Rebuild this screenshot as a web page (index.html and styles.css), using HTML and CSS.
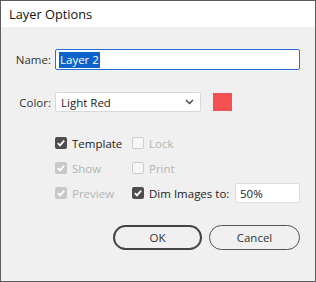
FILE: index.html
```html
<!DOCTYPE html>
<html>
<head>
<meta charset="utf-8">
<link rel="stylesheet" href="styles.css">
</head>
<body>
<div class="window">
  <div class="titlebar">Layer Options</div>
  <div class="content">
    <div class="field name-row">
      <label class="lbl">Name:</label>
      <div class="textbox focused"><span class="sel">Layer 2</span></div>
    </div>
    <div class="field color-row">
      <label class="lbl">Color:</label>
      <div class="select"><span>Light Red</span>
        <svg class="chev" width="9" height="6" viewBox="0 0 9 6"><path d="M1 1 L4.5 4.5 L8 1" fill="none" stroke="#444" stroke-width="1.4"/></svg>
      </div>
      <div class="swatch"></div>
    </div>
    <div class="checks">
      <div class="check"><span class="box on"><svg viewBox="0 0 12 12"><path d="M2.8 6.2 L5 8.4 L9.2 3.6" fill="none" stroke="#fff" stroke-width="1.8"/></svg></span><span class="txt">Template</span></div>
      <div class="check dis"><span class="box off"></span><span class="txt">Lock</span></div>
      <div class="check dis"><span class="box on"><svg viewBox="0 0 12 12"><path d="M2.8 6.2 L5 8.4 L9.2 3.6" fill="none" stroke="#fff" stroke-width="1.8"/></svg></span><span class="txt">Show</span></div>
      <div class="check dis"><span class="box off"></span><span class="txt">Print</span></div>
      <div class="check dis"><span class="box on"><svg viewBox="0 0 12 12"><path d="M2.8 6.2 L5 8.4 L9.2 3.6" fill="none" stroke="#fff" stroke-width="1.8"/></svg></span><span class="txt">Preview</span></div>
      <div class="check dim"><span class="box on"><svg viewBox="0 0 12 12"><path d="M2.8 6.2 L5 8.4 L9.2 3.6" fill="none" stroke="#fff" stroke-width="1.8"/></svg></span><span class="txt">Dim Images to:</span><div class="textbox small">50%</div></div>
    </div>
    <div class="buttons">
      <button class="btn default">OK</button>
      <button class="btn">Cancel</button>
    </div>
  </div>
</div>
</body>
</html>
```

FILE: styles.css
```css
html, body { margin: 0; padding: 0; }
body { font-family: "Open Sans", "Noto Sans", sans-serif; font-size: 11.5px; color: #222; }
.window {
  width: 316px; height: 282px; box-sizing: border-box;
  border: 1px solid #5c5c5c; background: #f0f0f0;
  display: flex; flex-direction: column;
}
.titlebar {
  height: 26px; background: #fff; padding-left: 8px;
  font-size: 12.8px; line-height: 27px; color: #111;
}
.content { display: flex; flex-direction: column; padding: 22px 15px 0 0; }
.field { display: flex; align-items: center; }
.lbl { width: 50px; text-align: right; padding-right: 4px; color: #333; font-size: 11.5px; }
.textbox {
  box-sizing: border-box; height: 21px; flex: 1;
  background: #fff; border: 1px solid #d4d4d4; border-radius: 2px;
  display: flex; align-items: center; padding-left: 3px; font-size: 11.5px;
}
.textbox.focused { border-color: #2a6fd0; }
.sel { background: #0b63c9; color: #fff; padding: 0 1px; line-height: 16px; }
.color-row { margin-top: 22px; }
.select {
  box-sizing: border-box; width: 146px; height: 20px;
  background: #fff; border: 1px solid #d8d8d8; border-radius: 2px;
  display: flex; align-items: center; justify-content: space-between;
  padding: 0 6px 0 5px; font-size: 11.5px;
}
.chev { display: block; }
.swatch { width: 19px; height: 18px; background: #f44f51; margin-left: 12px; }
.checks {
  display: grid; grid-template-columns: 77px 1fr; row-gap: 13px;
  margin: 25px 0 0 54px;
}
.check { display: flex; align-items: center; height: 12px; font-size: 11.5px; white-space: nowrap; }
.box { width: 12px; height: 12px; box-sizing: border-box; border-radius: 2px; margin-right: 5px; flex: none; }
.box svg { display: block; width: 12px; height: 12px; }
.box.on { background: #4d4d4d; }
.box.off { border: 1px solid #cdcdcd; background: #f7f7f7; }
.dis .box.on { background: #c8c8c8; }
.dis .txt { color: #b4b4b4; }
.dim .textbox.small { flex: none; width: 65px; height: 20px; margin-left: auto; border-color: #dedede; padding-left: 4px; }
.buttons { display: flex; justify-content: flex-end; gap: 7px; margin-top: 26px; }
.btn {
  font-family: inherit; font-size: 11.5px; color: #333; height: 25px;
  background: transparent; border: 1px solid #555; border-radius: 13px;
  width: 91px; padding: 0;
}
.btn.default { border: 2px solid #444; width: 89px; }
```
